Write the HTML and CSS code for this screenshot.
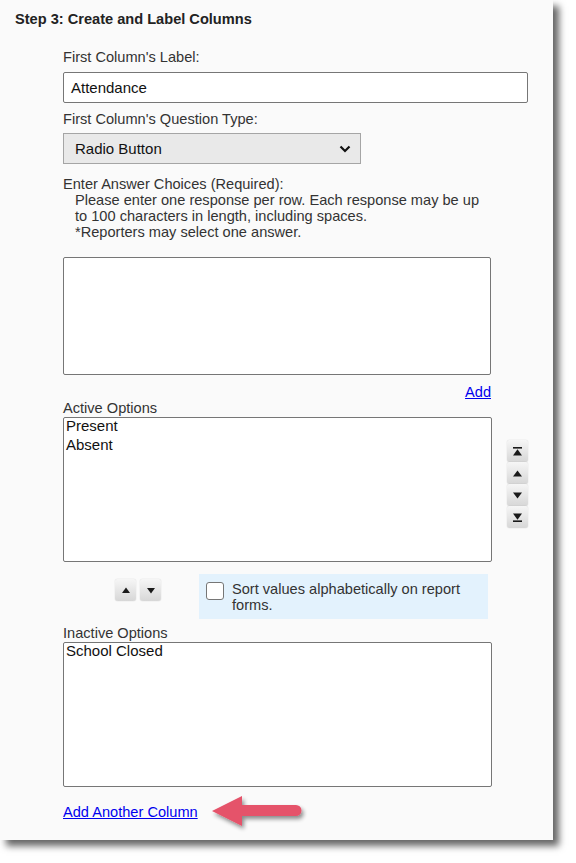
FILE: index.html
```html
<!DOCTYPE html>
<html>
<head>
<meta charset="utf-8">
<link rel="stylesheet" href="styles.css">
</head>
<body>
<div class="panel">
  <div class="step-title">Step 3: Create and Label Columns</div>
  <div class="content">
    <div class="label first">First Column's Label:</div>
    <div class="text-input">Attendance</div>
    <div class="label second">First Column's Question Type:</div>
    <div class="select">
      <span>Radio Button</span>
      <svg class="chevron" width="12" height="8" viewBox="0 0 12 8"><path d="M1.5 1.5 L6 6 L10.5 1.5" fill="none" stroke="#111" stroke-width="2.2"/></svg>
    </div>
    <div class="instructions">
      <div>Enter Answer Choices (Required):</div>
      <div class="indent">Please enter one response per row. Each response may be up</div>
      <div class="indent">to 100 characters in length, including spaces.</div>
      <div class="indent">*Reporters may select one answer.</div>
    </div>
    <div class="textarea"></div>
    <div class="add-row"><a href="#" class="link">Add</a></div>
    <div class="label list-label">Active Options</div>
    <div class="list-row">
      <div class="listbox">
        <div class="opt">Present</div>
        <div class="opt">Absent</div>
      </div>
      <div class="order-buttons">
        <div class="btn"><svg width="11" height="11" viewBox="0 0 11 11"><rect x="1" y="1" width="9" height="1.6" fill="#1a1a1a"/><path d="M5.5 3.2 L10 9.5 L1 9.5 Z" fill="#1a1a1a"/></svg></div>
        <div class="btn"><svg width="11" height="11" viewBox="0 0 11 11"><path d="M5.5 2.5 L10 8.5 L1 8.5 Z" fill="#1a1a1a"/></svg></div>
        <div class="btn"><svg width="11" height="11" viewBox="0 0 11 11"><path d="M1 2.5 L10 2.5 L5.5 8.5 Z" fill="#1a1a1a"/></svg></div>
        <div class="btn"><svg width="11" height="11" viewBox="0 0 11 11"><path d="M1 1.5 L10 1.5 L5.5 7.8 Z" fill="#1a1a1a"/><rect x="1" y="8.4" width="9" height="1.6" fill="#1a1a1a"/></svg></div>
      </div>
    </div>
    <div class="move-row">
      <div class="small-buttons">
        <div class="btn small"><svg width="10" height="9" viewBox="0 0 10 9"><path d="M5 1.5 L9 7 L1 7 Z" fill="#1a1a1a"/></svg></div>
        <div class="btn small"><svg width="10" height="9" viewBox="0 0 10 9"><path d="M1 2 L9 2 L5 7.5 Z" fill="#1a1a1a"/></svg></div>
      </div>
      <label class="sort-box">
        <span class="checkbox"></span>
        <span class="sort-text">Sort values alphabetically on report forms.</span>
      </label>
    </div>
    <div class="label inactive-label">Inactive Options</div>
    <div class="listbox inactive-list">
      <div class="opt">School Closed</div>
    </div>
    <div class="footer-row">
      <a href="#" class="link another">Add Another Column</a>
      <svg class="callout-arrow" width="100" height="46" viewBox="0 0 100 46">
        <defs>
          <filter id="sh" x="-20%" y="-30%" width="150%" height="180%">
            <feGaussianBlur in="SourceAlpha" stdDeviation="2"/>
            <feOffset dx="2" dy="3"/>
            <feComponentTransfer><feFuncA type="linear" slope="0.45"/></feComponentTransfer>
            <feMerge><feMergeNode/><feMergeNode in="SourceGraphic"/></feMerge>
          </filter>
        </defs>
        <path filter="url(#sh)" d="M4 22 L34 7 L34 16 L88 16 A5.5 5.5 0 0 1 88 27 L34 27 L34 37 Z" fill="#e5526a"/>
      </svg>
    </div>
  </div>
</div>
</body>
</html>
```

FILE: styles.css
```css
html, body {
  margin: 0;
  padding: 0;
  background: #ffffff;
}

body {
  font-family: "Liberation Sans", Arial, sans-serif;
  color: #333;
  width: 576px;
  height: 863px;
  overflow: hidden;
}

.panel {
  width: 553px;
  height: 840px;
  background: #fafafa;
  box-shadow: 6px 6px 7px rgba(0, 0, 0, 0.6);
  box-sizing: border-box;
  padding-top: 10px;
}

.step-title {
  font-weight: bold;
  font-size: 14.6px;
  line-height: 18px;
  color: #222;
  padding-left: 15px;
}

.content {
  padding-left: 63px;
  display: flex;
  flex-direction: column;
  align-items: flex-start;
}

.label {
  font-size: 14.6px;
  line-height: 18px;
  color: #333;
}

.label.first { margin-top: 20px; }
.label.second { margin-top: 7px; }

.text-input {
  margin-top: 6px;
  width: 465px;
  height: 31px;
  box-sizing: border-box;
  border: 1px solid #767676;
  border-radius: 2px;
  background: #fff;
  font-size: 15px;
  line-height: 29px;
  padding-left: 7px;
  color: #111;
}

.select {
  margin-top: 5px;
  width: 298px;
  height: 31px;
  box-sizing: border-box;
  border: 1px solid #a5a5a5;
  background: #e9e9e9;
  display: flex;
  align-items: center;
  justify-content: space-between;
  padding: 0 9px 0 11px;
  font-size: 15px;
  color: #111;
}

.chevron { display: block; }

.instructions {
  margin-top: 12px;
  font-size: 14.6px;
  line-height: 16px;
  color: #333;
}

.instructions .indent { padding-left: 12px; }

.textarea {
  margin-top: 17px;
  width: 428px;
  height: 118px;
  box-sizing: border-box;
  border: 1px solid #767676;
  border-radius: 2px;
  background: #fff;
}

.add-row {
  width: 428px;
  text-align: right;
  margin-top: 9px;
  font-size: 14.6px;
  line-height: 16px;
}

.link {
  color: #0000ee;
  text-decoration: underline;
}

.label.list-label { line-height: 16px; }

.list-row {
  margin-top: 1px;
  display: flex;
  align-items: flex-start;
}

.listbox {
  width: 429px;
  height: 145px;
  box-sizing: border-box;
  border: 1px solid #767676;
  border-radius: 2px;
  background: #fff;
  padding: 0 2px;
}

.opt {
  font-size: 15px;
  line-height: 19px;
  color: #111;
}

.opt:first-child {
  margin-top: -2px;
}

.order-buttons {
  margin-left: 15px;
  margin-top: 23px;
  display: flex;
  flex-direction: column;
}

.btn {
  width: 21px;
  height: 22px;
  box-sizing: border-box;
  border-radius: 3px;
  background: linear-gradient(#f6f6f6, #d7d7d7);
  box-shadow: 0 0 1px rgba(0, 0, 0, 0.3);
  display: flex;
  align-items: center;
  justify-content: center;
}

.btn svg { display: block; }

.move-row {
  margin-top: 12px;
  display: flex;
  align-items: flex-start;
}

.small-buttons {
  margin-left: 52px;
  margin-top: 5px;
  display: flex;
  gap: 4px;
}

.btn.small {
  width: 21px;
  height: 22px;
}

.sort-box {
  margin-left: 38px;
  width: 289px;
  height: 45px;
  box-sizing: border-box;
  background: #e3f2fd;
  display: flex;
  align-items: flex-start;
  padding: 7px 10px 0 7px;
}

.checkbox {
  flex: none;
  width: 18px;
  height: 18px;
  box-sizing: border-box;
  border: 1.5px solid #767676;
  border-radius: 3px;
  background: #fff;
  margin-top: 1px;
}

.sort-text {
  margin-left: 8px;
  font-size: 14.6px;
  line-height: 16px;
  color: #333;
}

.label.inactive-label {
  margin-top: 6px;
  line-height: 16px;
}

.inactive-list {
  margin-top: 1px;
}

.footer-row {
  position: relative;
  margin-top: 16px;
  font-size: 14.6px;
  line-height: 18px;
}

.callout-arrow {
  position: absolute;
  left: 145px;
  top: -14px;
}
```
